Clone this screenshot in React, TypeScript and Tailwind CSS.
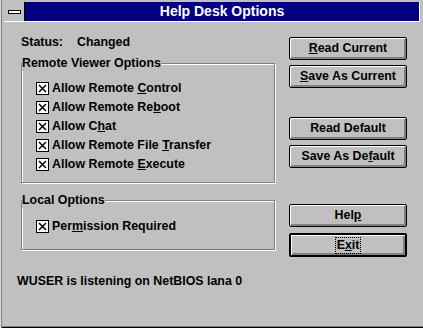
import React from "react";

const font = "font-['Liberation_Sans',Arial,sans-serif]";

function Check({ children }: { children: React.ReactNode }) {
  return (
    <div className="flex items-center h-[19px] gap-[3px]">
      <svg width="13" height="13" viewBox="0 0 13 13" className="shrink-0">
        <rect x="0.5" y="0.5" width="12" height="12" fill="#fff" stroke="#000" />
        <path d="M3 3 L10 10 M10 3 L3 10" stroke="#000" strokeWidth="1.5" />
      </svg>
      <span>{children}</span>
    </div>
  );
}

function Btn({
  children,
  isDefault,
  className,
}: {
  children: React.ReactNode;
  isDefault?: boolean;
  className?: string;
}) {
  return (
    <button
      className={
        "w-[118px] h-[23px] flex items-center justify-center bg-[#c0c0c0] rounded-[2px] border-black shadow-[inset_1px_1px_0_#fff,inset_-2px_-2px_0_#808080] " +
        (isDefault ? "border-2 " : "border ") +
        (className ?? "")
      }
    >
      {children}
    </button>
  );
}

function Group({ title, children, className }: { title: string; children: React.ReactNode; className?: string }) {
  return (
    <fieldset
      className={
        "border border-[#808080] shadow-[inset_1px_1px_0_#fff,1px_1px_0_#fff] " + (className ?? "")
      }
    >
      <legend className="h-[16px] leading-[16px] px-0 ml-0 bg-[#c0c0c0]">{title}</legend>
      {children}
    </fieldset>
  );
}

export default function App() {
  return (
    <div
      className={`${font} w-[423px] h-[328px] bg-[#c0c0c0] text-black text-[12.4px] font-bold overflow-hidden shadow-[inset_1px_0_0_#dcdcdc,inset_2px_0_0_#808080,inset_0_-1px_0_#000,inset_0_-2px_0_#808080]`}
    >
      {/* title bar */}
      <div className="mt-[2px] ml-[4px] w-[416px] h-[20px] flex border-r border-b border-white">
        <div className="w-[21px] h-full flex items-center justify-center border-r border-black bg-[#c0c0c0]">
          <div className="w-[13px] h-[4px] bg-white border border-black" />
        </div>
        <div className="flex-1 bg-[#000080] text-white text-[14px] flex items-center justify-center">
          Help Desk Options
        </div>
      </div>

      <div className="flex">
        {/* left column */}
        <div className="ml-[17px] w-[258px] flex flex-col">
          <div className="mt-[12px] pl-[4px] h-[16px] leading-[16px] flex">
            <span className="w-[56px]">Status:</span>
            <span>Changed</span>
          </div>
          <Group title="Remote Viewer Options" className="ml-[4px] mt-[5px] pt-[8px] pb-[8px]">
            <div className="pl-[14px]">
              <Check>
                Allow Remote <u>C</u>ontrol
              </Check>
              <Check>
                Allow Remote Re<u>b</u>oot
              </Check>
              <Check>
                Allow C<u>h</u>at
              </Check>
              <Check>
                Allow Remote File <u>T</u>ransfer
              </Check>
              <Check>
                Allow Remote <u>E</u>xecute
              </Check>
            </div>
          </Group>
          <Group title="Local Options" className="ml-[4px] mt-[9px] pt-[9px] pb-[13px]">
            <div className="pl-[14px]">
              <Check>
                Per<u>m</u>ission Required
              </Check>
            </div>
          </Group>
          <div className="mt-[23px] h-[16px] leading-[16px]">WUSER is listening on NetBIOS lana 0</div>
        </div>

        {/* right column */}
        <div className="ml-[14px] pt-[15px] flex flex-col">
          <Btn>
            <span>
              <u>R</u>ead Current
            </span>
          </Btn>
          <Btn className="mt-[5px]">
            <span>
              <u>S</u>ave As Current
            </span>
          </Btn>
          <Btn className="mt-[29px]">Read Default</Btn>
          <Btn className="mt-[5px]">
            <span>
              Save As De<u>f</u>ault
            </span>
          </Btn>
          <Btn className="mt-[36px]">
            <span>
              Hel<u>p</u>
            </span>
          </Btn>
          <Btn isDefault className="mt-[6px] h-[24px]">
            <span className="border border-dotted border-black px-[1px] leading-[15px]">
              E<u>x</u>it
            </span>
          </Btn>
        </div>
      </div>
    </div>
  );
}
